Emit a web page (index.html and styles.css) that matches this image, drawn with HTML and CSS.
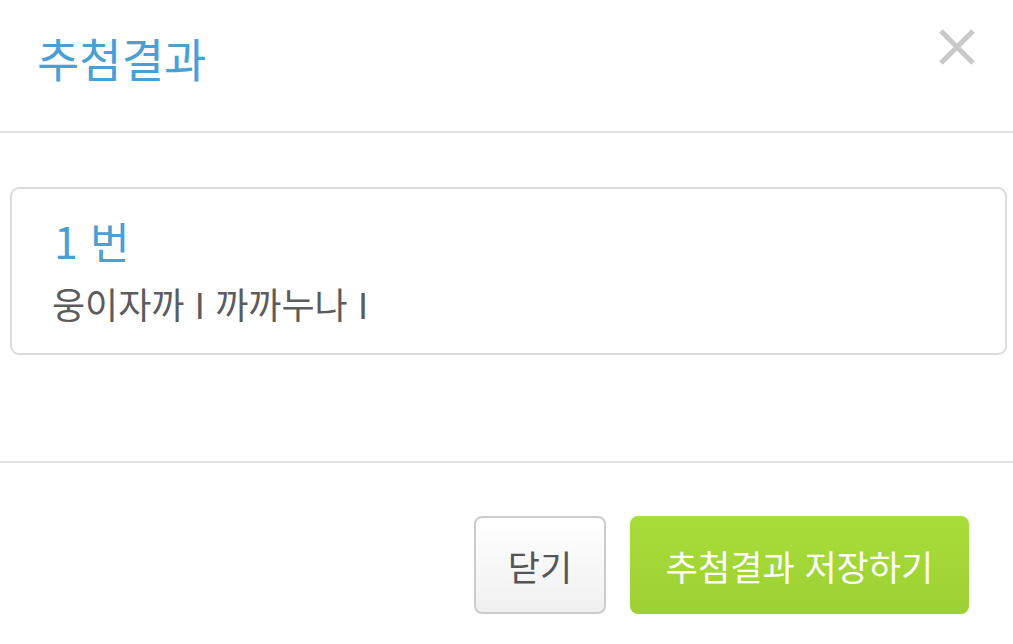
FILE: index.html
```html
<!DOCTYPE html>
<html lang="ko">
<head>
<meta charset="utf-8">
<link rel="stylesheet" href="styles.css">
</head>
<body>
<div class="modal">
  <header class="modal-header">
    <h1 class="modal-title">추첨결과</h1>
    <button class="close-btn" aria-label="닫기">
      <svg width="38" height="38" viewBox="0 0 38 38"><path d="M3 3 L35 35 M35 3 L3 35" stroke="#c9c9c9" stroke-width="5" fill="none"/></svg>
    </button>
  </header>
  <main class="modal-body">
    <div class="result-card">
      <div class="result-num">1 번</div>
      <div class="result-names">웅이자까 I 까까누나 I</div>
    </div>
  </main>
  <footer class="modal-footer">
    <button class="btn btn-default">닫기</button>
    <button class="btn btn-primary">추첨결과 저장하기</button>
  </footer>
</div>
</body>
</html>
```
FILE: styles.css
```css
html, body {
  margin: 0;
  padding: 0;
  background: #fff;
  font-family: "Noto Sans CJK KR", "Noto Sans", sans-serif;
}
.modal {
  width: 1013px;
  height: 644px;
  display: flex;
  flex-direction: column;
}
.modal-header {
  height: 131px;
  border-bottom: 2px solid #e2e2e2;
  display: flex;
  align-items: center;
  justify-content: space-between;
  padding: 0 37px 0 37px;
  box-sizing: content-box;
}
.modal-title {
  margin: 0;
  font-size: 46px;
  font-weight: 400;
  color: #4a9fd5;
  line-height: 1;
  margin-top: -18px;
}
.close-btn {
  border: 0;
  background: none;
  padding: 0;
  width: 38px;
  height: 38px;
  margin-top: -38px;
  display: flex;
}
.modal-body {
  padding: 54px 6px 0 10px;
  border-bottom: 2px solid #e2e2e2;
  box-sizing: border-box;
  height: 330px;
}
.result-card {
  height: 168px;
  box-sizing: border-box;
  border: 2px solid #dcdcdc;
  border-radius: 9px;
  padding: 30px 0 0 42px;
}
.result-num {
  font-size: 43px;
  color: #4a9fd5;
  line-height: 1;
}
.result-names {
  font-size: 36px;
  color: #5c5c5c;
  line-height: 1;
  margin-top: 23px;
  margin-left: -2px;
}
.modal-footer {
  display: flex;
  justify-content: flex-end;
  gap: 24px;
  padding: 53px 44px 0 0;
}
.btn {
  height: 98px;
  border-radius: 8px;
  font-family: inherit;
  font-size: 35px;
  padding: 0;
}
.btn-default {
  width: 132px;
  background: linear-gradient(#ffffff, #f0f0f0);
  border: 2px solid #cccccc;
  color: #555;
}
.btn-primary {
  width: 339px;
  background: linear-gradient(#a8de3a, #9dd034);
  border: 0;
  color: #fff;
}
```
